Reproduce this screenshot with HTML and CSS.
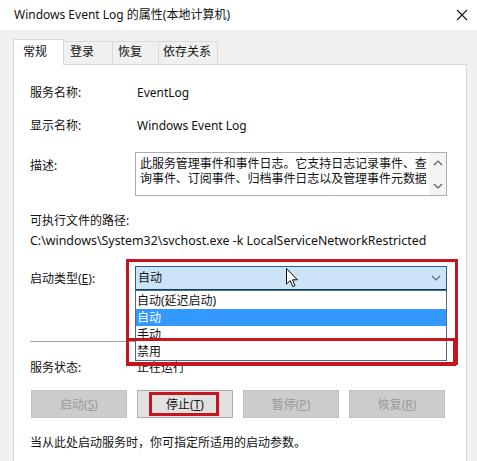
FILE: index.html
```html
<!DOCTYPE html>
<html lang="zh-CN">
<head>
<meta charset="utf-8">
<title>Windows Event Log 的属性(本地计算机)</title>
<link rel="stylesheet" href="styles.css">
</head>
<body>
<div class="window">
  <div class="titlebar">
    <span class="title">Windows Event Log 的属性(本地计算机)</span>
    <svg class="close" width="12" height="12" viewBox="0 0 12 12"><path d="M1 1 L11 11 M11 1 L1 11" stroke="#111" stroke-width="1.1" fill="none"/></svg>
  </div>
  <div class="tabs">
    <div class="tab tab--active tab--general">常规</div>
    <div class="tab tab--logon">登录</div>
    <div class="tab tab--recovery">恢复</div>
    <div class="tab tab--deps">依存关系</div>
  </div>
  <div class="panel">
    <div class="row row--first">
      <span class="label">服务名称:</span>
      <span class="value">EventLog</span>
    </div>
    <div class="row row--gap">
      <span class="label">显示名称:</span>
      <span class="value">Windows Event Log</span>
    </div>
    <div class="row row--desc">
      <span class="label label--desc">描述:</span>
      <div class="textbox">
        <div class="textbox-text">此服务管理事件和事件日志。它支持日志记录事件、查询事件、订阅事件、归档事件日志以及管理事件元数据</div>
        <div class="scrollbar">
          <svg width="10" height="6" viewBox="0 0 10 6"><path d="M1 5 L5 1 L9 5" stroke="#5a5a5a" stroke-width="1.2" fill="none"/></svg>
          <svg width="10" height="6" viewBox="0 0 10 6"><path d="M1 1 L5 5 L9 1" stroke="#5a5a5a" stroke-width="1.2" fill="none"/></svg>
        </div>
      </div>
    </div>
    <div class="line line--gap">可执行文件的路径:</div>
    <div class="line line--path">C:\windows\System32\svchost.exe -k LocalServiceNetworkRestricted</div>
    <div class="row row--gap">
      <span class="label label--combo">启动类型(<u>E</u>):</span>
      <div class="combo-wrap">
        <div class="combo">
          <span>自动</span>
          <svg width="10" height="6" viewBox="0 0 10 6"><path d="M1 1 L5 5 L9 1" stroke="#606060" stroke-width="1.1" fill="none"/></svg>
        </div>
        <div class="dropdown">
          <div class="option">自动(延迟启动)</div>
          <div class="option option--selected">自动</div>
          <div class="option">手动</div>
          <div class="option">禁用</div>
        </div>
        <div class="mark mark--outer"></div>
        <div class="mark mark--disabled"></div>
        <svg class="cursor" width="13" height="20" viewBox="0 0 13 20"><path d="M0.5 0.5 L0.5 16 L4.2 12.6 L6.8 18.6 L9 17.6 L6.5 11.8 L11.3 11.8 Z" fill="#fff" stroke="#000" stroke-width="1" stroke-linejoin="miter"/></svg>
      </div>
    </div>
    <div class="separator"></div>
    <div class="row row--status">
      <span class="label">服务状态:</span>
      <span class="value">正在运行</span>
    </div>
    <div class="buttons">
      <div class="btn btn--disabled">启动(<u>S</u>)</div>
      <div class="btn btn--stop">停止(<u>T</u>)<span class="mark mark--stop"></span></div>
      <div class="btn btn--disabled">暂停(<u>P</u>)</div>
      <div class="btn btn--disabled">恢复(<u>R</u>)</div>
    </div>
    <div class="line line--hint">当从此处启动服务时，你可指定所适用的启动参数。</div>
  </div>
</div>
</body>
</html>
```
FILE: styles.css
```css
* { box-sizing: border-box; }
html, body { margin: 0; padding: 0; }
body {
  width: 477px;
  height: 461px;
  overflow: hidden;
  background: #f0f0f0;
  font-family: "Noto Sans", "Noto Sans CJK SC", sans-serif;
  font-size: 12px;
  color: #111;
}
.window { width: 477px; height: 461px; }

.titlebar {
  height: 30px;
  background: #fff;
  display: flex;
  align-items: center;
  justify-content: space-between;
  padding: 0 9px 0 14px;
}
.title { font-size: 12px; line-height: 16px; }

.tabs {
  display: flex;
  align-items: flex-end;
  height: 34px;
  padding-left: 13px;
  position: relative;
  z-index: 2;
}
.tab {
  height: 23px;
  line-height: 20px;
  border: 1px solid #d9d9d9;
  border-bottom: none;
  background: #f0f0f0;
  margin-left: -1px;
  padding-left: 6px;
}
.tab--active {
  height: 26px;
  margin-left: 0;
  margin-bottom: -1px;
  background: #fff;
  padding-top: 2px;
  padding-left: 9px;
}
.tab--general { width: 51px; }
.tab--logon { width: 50px; }
.tab--recovery { width: 47px; padding-left: 5px; }
.tab--deps { width: 60px; padding-left: 4px; }

.panel {
  margin-left: 13px;
  width: 454px;
  height: 420px;
  background: #fff;
  border: 1px solid #d9d9d9;
  padding: 20px 19px 0 16px;
  position: relative;
}

.row {
  display: grid;
  grid-template-columns: 105px 312px;
  line-height: 16px;
}
.row--gap { margin-top: 17px; }
.row--desc { margin-top: 18px; }
.row--status { margin-top: 18px; }
.value { padding-left: 2px; }
.label--desc { padding-top: 6px; }
.label--combo { padding-top: 5px; }

.textbox {
  height: 44px;
  border: 1px solid #abadb3;
  display: flex;
}
.textbox-text {
  flex: 1;
  padding: 3px 0 0 4px;
  line-height: 15px;
  letter-spacing: -0.05px;
  word-break: break-all;
  overflow: hidden;
}
.scrollbar {
  width: 17px;
  flex: none;
  background: #f4f4f4;
  display: flex;
  flex-direction: column;
  justify-content: space-between;
  align-items: center;
  padding: 7px 0 6px;
}

.line { line-height: 16px; }
.line--gap { margin-top: 17px; }
.line--path { margin-top: 4px; font-size: 12.4px; }
.line--hint { margin-top: 17px; }

.combo-wrap { position: relative; height: 24px; }
.combo {
  height: 24px;
  border: 1px solid #1f5f94;
  border-bottom-color: #0e3f66;
  background: #cce4f7;
  display: flex;
  align-items: center;
  justify-content: space-between;
  padding: 0 5px 0 2px;
}
.dropdown {
  position: absolute;
  top: 24px;
  left: 0;
  width: 312px;
  background: #fff;
  border: 1px solid #4c6a84;
  padding-top: 1px;
  z-index: 3;
}
.option {
  height: 17px;
  line-height: 17px;
  padding-left: 1px;
}
.option--selected { background: #3399ff; color: #fff; }

.mark {
  position: absolute;
  border: 3px solid #c5161d;
  z-index: 4;
}
.mark--outer { left: -9px; top: -7px; width: 332px; height: 106px; }
.mark--disabled { left: -9px; top: 72px; width: 330px; height: 28px; }
.mark--stop { left: 11px; top: 1px; width: 70px; height: 24px; }
.cursor { position: absolute; left: 151px; top: 2px; z-index: 5; }

.separator {
  margin-top: 51px;
  height: 1px;
  background: #a0a0a0;
  margin-right: 2px;
}

.buttons {
  display: flex;
  gap: 10px;
  margin-top: 14px;
  margin-left: 1px;
}
.btn {
  width: 96px;
  height: 28px;
  display: flex;
  align-items: center;
  justify-content: center;
  border: 1px solid #bfbfbf;
  position: relative;
}
.btn--disabled { background: #cccccc; color: #9a9a9a; }
.btn--stop { background: #e1e1e1; border-color: #adadad; color: #111; }
```
